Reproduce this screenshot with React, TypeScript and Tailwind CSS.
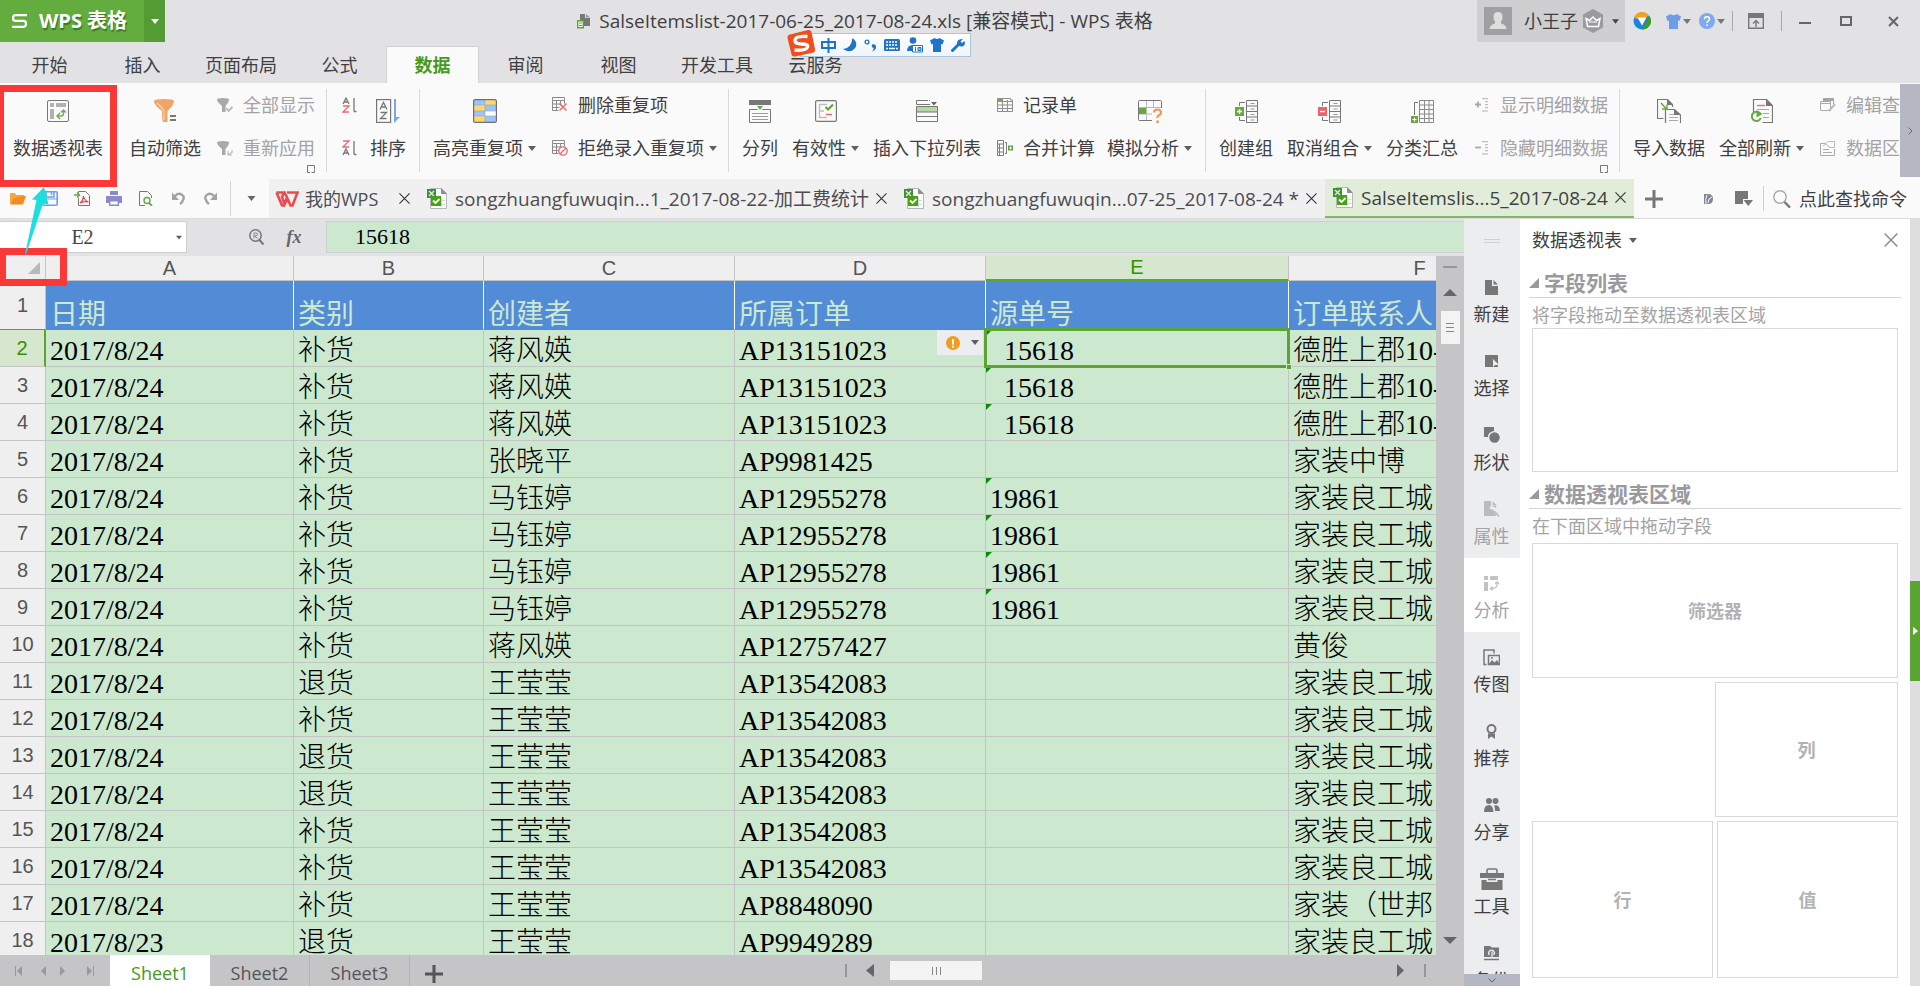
import type { ReactNode } from "react";

type Kids = { children: ReactNode };

function Svg({ w, h, children, cls = "" }: Kids & { w: number; h: number; cls?: string }) {
  return (
    <svg width={w} height={h} viewBox={`0 0 ${w} ${h}`} fill="none" className={`shrink-0 ${cls}`} aria-hidden="true">
      {children}
    </svg>
  );
}

function Caret({ color = "#5f5f5f", w = 8 }: { color?: string; w?: number }) {
  return (
    <svg width={w} height="5" viewBox="0 0 8 5" className="shrink-0" aria-hidden="true">
      <path d="M0 0h8L4 5z" fill={color} />
    </svg>
  );
}

function Cross({ size = 11, color = "#333" }: { size?: number; color?: string }) {
  return (
    <svg width={size} height={size} viewBox="0 0 12 12" className="shrink-0" aria-hidden="true">
      <path d="M.5 .5l11 11M11.5 .5l-11 11" stroke={color} strokeWidth="1.2" />
    </svg>
  );
}

/* ---------- ribbon ---------- */

function Big({ icon, label, drop }: { icon: ReactNode; label: string; drop?: boolean }) {
  return (
    <button className="flex shrink-0 flex-col items-center gap-3 pt-[15px]">
      <span className="flex h-[26px] items-center">{icon}</span>
      <span className="flex items-center gap-[5px] leading-6 whitespace-nowrap">
        {label}
        {drop && <Caret />}
      </span>
    </button>
  );
}

function Small({ icon, label, drop, off }: { icon: ReactNode; label: string; drop?: boolean; off?: boolean }) {
  return (
    <button className={`flex items-center gap-[10px] leading-6 whitespace-nowrap ${off ? "text-[#a3a3a6]" : ""}`}>
      <span className="flex w-4 justify-center">{icon}</span>
      <span className="flex items-center gap-[5px]">
        {label}
        {drop && <Caret />}
      </span>
    </button>
  );
}

function Stack({ children, more }: Kids & { more?: boolean }) {
  return (
    <div className="-mr-[2px] flex shrink-0 flex-col pt-[10px] pl-[2px]">
      <div className="flex flex-col items-start gap-[19px]">{children}</div>
      {more && (
        <button aria-label="更多选项" className="mt-[5px] self-end">
          <Svg w={8} h={8}>
            <path d="M3 7.500H.5V.5h7V4M4.500 7.500h3v-3" stroke="#777" />
          </Svg>
        </button>
      )}
    </div>
  );
}

function Group({ children, last }: Kids & { last?: boolean }) {
  return (
    <>
      <div className="flex shrink-0 items-start gap-[14px] px-[13px]">{children}</div>
      {!last && <div className="mt-[6px] h-[83px] w-px shrink-0 bg-[#dadadc]" />}
    </>
  );
}

const pivotIcon = (
  <Svg w={22} h={22}>
    <rect x=".5" y=".5" width="21" height="21" rx="1.500" stroke="#777" />
    <path d="M3 3h4v4H3zM9 3h10v4H9zM3 9h4v10H3z" fill="#b1b1b3" />
    <path d="M16.500 10.500v3q0 2.500-2.500 2.500h-3M14 12.500l2.500-2.500 2.500 2.500M13 13l-3 3 3 3" stroke="#74ad54" strokeWidth="1.500" />
  </Svg>
);
const filterIcon = (
  <Svg w={23} h={24}>
    <path d="M0 2Q0 0 10 0t10 2q0 4-6.500 10v11H9q-1-3-1-11Q0 6 0 2z" fill="#f2a368" />
    <path d="M3 4q5 4 7 8v9" stroke="#fbd5b8" strokeWidth="1.200" />
    <path d="M16 17h6M16 21h6" stroke="#777" strokeWidth="2" />
  </Svg>
);
const smallFilter = (kind: "check" | "again") => (
  <Svg w={16} h={15}>
    <path d="M0 1.500Q0 0 6 0t6 1.500Q12 4 8.500 8v6H5V8Q0 4 0 1.500z" fill="#a9a9ab" />
    {kind === "check" ? (
      <path d="M9 10l2.500 3L15.500 9" stroke="#b8b8ba" strokeWidth="1.800" />
    ) : (
      <path d="M15 9v2.500L11 14M11 10v4h4" stroke="#b8b8ba" strokeWidth="1.200" />
    )}
  </Svg>
);
const letterA = "M0 6L3 0l3 6M1.200 4h3.600";
const letterZ = "M0 0h6L0 6h6";
const sortSmall = (up: boolean) => (
  <Svg w={15} h={16}>
    <g transform="translate(1 1)">
      <path d={up ? letterA : letterZ} stroke={up ? "#777" : "#ea6b70"} strokeWidth="1.300" />
    </g>
    <g transform="translate(1 9)">
      <path d={up ? letterZ : letterA} stroke={up ? "#ea6b70" : "#777"} strokeWidth="1.300" />
    </g>
    <path d="M12 1v13.500M12 14.500h2.500" stroke="#777" strokeWidth="1.300" />
  </Svg>
);
const sortIcon = (
  <Svg w={24} h={24}>
    <rect x=".6" y=".6" width="14" height="22.800" stroke="#777" strokeWidth="1.200" />
    <path d="M4 10.500l3.500-7 3.500 7M5.300 8h4.400M4.500 13.500h6l-6 6h6" stroke="#777" strokeWidth="1.300" />
    <path d="M18 0h2v18h4l-6 6z" fill="#7ea6ec" />
  </Svg>
);
const highlightIcon = (
  <Svg w={24} h={24}>
    <path d="M1 1h11v5H1zM12 6h11v6H12zM1 12h11v5H1zM12 17h11v6H12z" fill="#9cc4fb" />
    <path d="M12 1h11v5H12zM1 6h11v6H1zM1 17h11v6H1z" fill="#ffd76a" />
    <path d="M12 12h11v5H12z" fill="#fff" />
    <path d="M12 1v22M1 6h22M1 12h22M1 17h22" stroke="#8aa4c8" strokeWidth=".6" />
    <rect x=".6" y=".6" width="22.800" height="22.800" rx="1.500" stroke="#6f6f78" strokeWidth="1.200" />
  </Svg>
);
const dupIcon = (ban: boolean) => (
  <Svg w={16} h={16}>
    <path d="M.5 .5h12v3H.5zM.5 3.500v10h6M4.500 3.500v10M8.500 3.500v5M.5 7h9M.5 10.500h7M12.500 3.500v3" stroke="#8a8a8c" />
    {ban ? (
      <>
        <circle cx="11" cy="11" r="4.200" stroke="#e86a6a" strokeWidth="1.300" fill="#fafafa" />
        <path d="M8 14l6-6" stroke="#e86a6a" strokeWidth="1.300" />
      </>
    ) : (
      <path d="M7.500 6.500l7 7M14.500 6.500l-7 7" stroke="#e86a6a" strokeWidth="1.500" />
    )}
  </Svg>
);
const splitIcon = (
  <Svg w={22} h={23}>
    <path d="M0 0h22v5H0z" fill="#777" />
    <path d="M8 6h6l-3 4z" fill="#67a845" />
    <path d="M8.500 9.500h-8v13h21v-13h-8" stroke="#777" />
    <path d="M3 13.500h16M3 16.500h16M3 19.500h16" stroke="#9a9a9c" />
  </Svg>
);
const validIcon = (
  <Svg w={22} h={22}>
    <rect x=".6" y=".6" width="20.800" height="20.800" rx="1.500" stroke="#777" strokeWidth="1.200" />
    <path d="M12 4.500H4.500v13H12M4.500 11H9" stroke="#bdbdbf" strokeWidth="1.300" />
    <path d="M10.500 7l2.500 2.500L18 4.500" stroke="#59a634" strokeWidth="2" />
    <path d="M11 14.500h6" stroke="#ea6b6b" strokeWidth="1.500" />
  </Svg>
);
const dropListIcon = (
  <Svg w={22} h={22}>
    <path d="M12 .5H.5v4H12M12 4.500h2M13 .5h1" stroke="#777" />
    <path d="M15 2h6l-3 3.500z" fill="#666" />
    <path d="M1 7h20v5H1z" fill="#b7d7a0" />
    <path d="M.5 6.500h21v15H.5zM.5 12h21M.5 16.500h21" stroke="#777" />
  </Svg>
);
const recordIcon = (
  <Svg w={16} h={14}>
    <path d="M1 1h5v2.500H1z" fill="#67b04b" />
    <path d="M.5 .5h13v1.500h2v11.500H.5zM.5 3.500h15M.5 7h15M.5 10.500h15M5.500 .5v13M10.500 2v12" stroke="#8f8f91" />
  </Svg>
);
const mergeIcon = (
  <Svg w={16} h={16}>
    <path d="M.5 .5h6v15h-6zM.5 4h6M.5 8h6M.5 12h6M2.500 4v12" stroke="#7f7f81" />
    <path d="M8 2.500h1.500v11H8" stroke="#7f7f81" />
    <path d="M11 5.500h5v5h-5z" fill="#5ba43a" />
    <path d="M12 8h3M13.500 6.500v3" stroke="#fff" />
  </Svg>
);
const whatIfIcon = (
  <Svg w={24} h={23}>
    <rect x=".5" y=".5" width="23" height="20" rx="1" stroke="#777" />
    <path d="M8.500 1v19M15.500 1v19M1 7.500h22M1 14h22" stroke="#b9b9bb" />
    <path d="M1 8h7v6H1z" fill="#67a845" />
    <path d="M14 8h10v15H14z" fill="#fafafa" />
    <path d="M16 12.500q0-3 3.500-3t3.500 3q0 1.700-2 2.700t-1.500 2.800" stroke="#ef9a55" strokeWidth="2.200" />
    <path d="M18.300 20.500h2.500V23h-2.500z" fill="#ef9a55" />
  </Svg>
);
const groupIcon = (color: string, minus: boolean) => (
  <Svg w={23} h={23}>
    <path d="M11.500 .5h11v22h-11zM11.500 6h11M11.500 11.500h11M11.500 17h11" stroke="#777" />
    <path d="M15.500 3.500h4M15.500 9h4M15.500 14.500h4M15.500 20h4" stroke="#999" />
    <path d="M10 2.500H4.500V6M4.500 17v3.500H10" stroke="#777" />
    <path d="M0 7h9v9H0z" fill={color} />
    <path d={minus ? "M2 11.500h5" : "M2 11.500h5M4.500 9v5"} stroke="#fff" strokeWidth="1.400" />
  </Svg>
);
const subtotalIcon = (
  <Svg w={23} h={23}>
    <path d="M8.500 .5h14v22h-14zM8.500 5h14M8.500 9.500h14M8.500 14h14M8.500 18.500h14M13.500 .5v22M18 .5v22" stroke="#8a8a8c" />
    <path d="M7 2.500H3.500V15" stroke="#777" />
    <path d="M0 16h7v7H0z" fill="#67a845" />
    <path d="M1.500 19.500h4M3.500 17.500v4" stroke="#fff" />
  </Svg>
);
const detailIcon = (minus: boolean) => (
  <Svg w={15} h={14}>
    <path d={minus ? "M0 6.500h6" : "M0 6.500h6M3 3.500v6"} stroke="#a9a9ab" strokeWidth="1.800" />
    <path d="M7 .7h6M10 3.700h3M10 6.700h3M10 9.700h3M7 13h6" stroke="#b0b0b2" />
  </Svg>
);
const importIcon = (
  <Svg w={24} h={24}>
    <path d="M6.500 19.500h-6V.5h10l5 5V8" stroke="#777" strokeWidth="1.200" />
    <path d="M10 0l6 6h-6zM17 10l7 6h-7z" fill="#777" />
    <path d="M8.500 24V10.500h9l6 5.500v8" stroke="#777" strokeWidth="1.200" />
    <path d="M12 15.500h5M12 18.500h9M12 21.500h9" stroke="#aaa" />
    <path d="M4 4l5.500 6M5 10h5V5.500" stroke="#67a845" strokeWidth="1.500" />
  </Svg>
);
const refreshIcon = (
  <Svg w={22} h={24}>
    <path d="M2.500 13V.5h13l6 6v17h-10" stroke="#777" strokeWidth="1.200" />
    <path d="M15 0l7 7h-7z" fill="#777" />
    <path d="M6 6.500h8" stroke="#ea6b6b" strokeWidth="1.400" />
    <path d="M6 10.500h12M12 14.500h6M12 18.500h6" stroke="#aaa" />
    <path d="M9 14.500a4.600 4.600 0 1 0 .8 4.500" stroke="#67a845" strokeWidth="2" />
    <path d="M5.500 11l6 4-6 3.500z" fill="#67a845" />
  </Svg>
);
const editIcon = (
  <Svg w={16} h={15}>
    <path d="M3 0h11v3H3z" fill="#a6a6a8" />
    <path d="M.5 5.500h10v7H.5zM.5 3.500h10v2H.5zM13.500 3v3" stroke="#ababad" />
    <path d="M9 13l6-7" stroke="#bcbcbe" strokeWidth="2" />
  </Svg>
);
const areaIcon = (
  <Svg w={16} h={15}>
    <path d="M.5 2.500h5M14.500 8v6.500H.5v-12M3 8.500h6M3 11.500h9" stroke="#ababad" />
    <path d="M8 .5h6.500v6H10L5.500 3z" stroke="#bcbcbe" />
    <path d="M3 5l3-2 4 4" stroke="#bcbcbe" />
  </Svg>
);

function Ribbon() {
  return (
    <div className="flex h-24 shrink-0 bg-[#fafafa]">
      <div className="flex min-w-0 flex-1 overflow-hidden">
        <div className="flex shrink-0 px-[13px]">
          <Big icon={pivotIcon} label="数据透视表" />
        </div>
        <Group>
          <Big icon={filterIcon} label="自动筛选" />
          <Stack more>
            <Small off icon={smallFilter("check")} label="全部显示" />
            <Small off icon={smallFilter("again")} label="重新应用" />
          </Stack>
        </Group>
        <Group>
          <Stack>
            <button aria-label="升序" className="flex h-6 w-4 items-center">{sortSmall(true)}</button>
            <button aria-label="降序" className="flex h-6 w-4 items-center">{sortSmall(false)}</button>
          </Stack>
          <Big icon={sortIcon} label="排序" />
        </Group>
        <Group>
          <Big icon={highlightIcon} label="高亮重复项" drop />
          <Stack>
            <Small icon={dupIcon(false)} label="删除重复项" />
            <Small icon={dupIcon(true)} label="拒绝录入重复项" drop />
          </Stack>
        </Group>
        <Group>
          <Big icon={splitIcon} label="分列" />
          <Big icon={validIcon} label="有效性" drop />
          <Big icon={dropListIcon} label="插入下拉列表" />
          <Stack>
            <Small icon={recordIcon} label="记录单" />
            <Small icon={mergeIcon} label="合并计算" />
          </Stack>
          <Big icon={whatIfIcon} label="模拟分析" drop />
        </Group>
        <Group>
          <Big icon={groupIcon("#67a845", false)} label="创建组" />
          <Big icon={groupIcon("#ea6468", true)} label="取消组合" drop />
          <Big icon={subtotalIcon} label="分类汇总" />
          <Stack more>
            <Small off icon={detailIcon(false)} label="显示明细数据" />
            <Small off icon={detailIcon(true)} label="隐藏明细数据" />
          </Stack>
        </Group>
        <Group last>
          <Big icon={importIcon} label="导入数据" />
          <Big icon={refreshIcon} label="全部刷新" drop />
          <Stack>
            <Small off icon={editIcon} label="编辑查" />
            <Small off icon={areaIcon} label="数据区" />
          </Stack>
        </Group>
      </div>
      <button aria-label="展开功能区" className="mt-px mb-[2px] flex w-5 shrink-0 items-center justify-center bg-[#b5b8c2]">
        <Svg w={5} h={8}>
          <path d="M.5 .5L4 4 .5 7.500" stroke="#666" />
        </Svg>
      </button>
    </div>
  );
}

/* ---------- title bar ---------- */

function TitleBar() {
  return (
    <header className="flex h-[42px] shrink-0 items-stretch">
      <button className="flex w-[144px] shrink-0 items-center gap-3 bg-[#63ac3e] pl-3 text-xl font-bold text-white">
        <Svg w={15} h={14}>
          <path d="M15 1.200H3.500Q1 1.200 1 4t2.500 2.800h8Q14 6.800 14 9.800t-2.500 3H0" stroke="#fff" strokeWidth="2.200" />
        </Svg>
        <span className="whitespace-nowrap [text-shadow:1px_2px_1px_#3c7a1e]">WPS 表格</span>
      </button>
      <button aria-label="应用菜单" className="flex w-[21px] shrink-0 items-center justify-center bg-[#559b33]">
        <Caret color="#fff" w={8} />
      </button>
      <div className="flex min-w-0 flex-1 items-center justify-center gap-2 pl-[88px]">
        <Svg w={14} h={15}>
          <path d="M3 0h5v4h5v8H7V6H3z" fill="#777" />
          <path d="M9 0l4 3.500H9z" fill="#999" />
          <path d="M.7 6.700h5.600v7H.7z" fill="#fff" stroke="#59a634" strokeWidth="1.400" />
          <path d="M2 9h3M2 11.500h3" stroke="#59a634" />
        </Svg>
        <h1 className="truncate text-[19px]">SalseItemslist-2017-06-25_2017-08-24.xls [兼容模式] - WPS 表格</h1>
      </div>
      <div className="flex shrink-0 items-center pr-[21px]">
        <button className="mr-2 flex h-full w-[148px] items-center bg-[#cfcfd1] pl-[7px]">
          <Svg w={28} h={28} cls="mr-3">
            <path d="M0 0h28v28H0z" fill="#a0a0a3" />
            <path d="M14 5q4.500 0 4.500 5 0 3-1.500 4.500v2q5 1 5.500 5.500h-17q.5-4.500 5.500-5.500v-2Q9.500 13 9.500 10 9.500 5 14 5z" fill="#dededf" />
          </Svg>
          小王子
          <Svg w={22} h={24} cls="mx-1">
            <path d="M11 0l10 5.500v13L11 24 1 18.500v-13z" fill="#9b9b9e" />
            <path d="M4 9.500l3.500 2L11 8l3.500 3.500 3.500-2-1.500 8h-11z" stroke="#fff" strokeWidth="1.500" />
            <path d="M7 13h8" stroke="#fff" />
          </Svg>
          <span className="ml-1"><Caret color="#444" w={7} /></span>
        </button>
        <button aria-label="在线服务">
          <Svg w={18} h={18}>
            <circle cx="9" cy="9" r="8.500" fill="#1c83e0" />
            <path d="M1 6a8.500 8.500 0 0 1 15-2.500L9 8z" fill="#f5a01e" />
            <path d="M16 3.500A8.500 8.500 0 0 1 9 17.500z" fill="#3a9a2b" />
            <path d="M4.500 5.500h9L9 13.500z" fill="#fff" />
          </Svg>
        </button>
        <button aria-label="皮肤" className="ml-[15px] flex items-center gap-[2px]">
          <Svg w={15} h={15}>
            <path d="M4.500 0q3 2.500 6 0L15 2.500 13.500 7 12 6.500V15H3V6.500L1.500 7 0 2.500z" fill="#6d9ce8" />
          </Svg>
          <Caret color="#777" />
        </button>
        <button aria-label="帮助" className="ml-2 flex items-center gap-[2px]">
          <Svg w={16} h={16}>
            <circle cx="8" cy="8" r="8" fill="#82a8f0" />
            <path d="M5.500 6.200q0-2.500 2.500-2.500t2.500 2.300q0 1.200-1.300 1.900T8 10" stroke="#fff" strokeWidth="1.500" />
            <path d="M7.200 11.500h1.600V13H7.200z" fill="#fff" />
          </Svg>
          <Caret color="#777" />
        </button>
        <span className="ml-[7px] h-5 w-px bg-[#a8a8ab]" />
        <button aria-label="隐藏功能区" className="mr-[17px] ml-[15px]">
          <Svg w={16} h={16}>
            <path d="M.7 .7h14.600v14.600H.7z" stroke="#777" strokeWidth="1.400" />
            <path d="M1 1h14v4H1z" fill="#777" />
            <path d="M8 14V8M5 10.500l3-3 3 3" stroke="#777" strokeWidth="1.400" />
          </Svg>
        </button>
        <span className="h-5 w-px bg-[#a8a8ab]" />
        <button aria-label="最小化" className="ml-[17px] flex h-4 w-3 items-center pt-[3px]"><span className="h-[2px] w-full bg-[#666]" /></button>
        <button aria-label="最大化" className="ml-[29px] h-[10px] w-3 border-2 border-[#666]" />
        <button aria-label="关闭" className="ml-9">
          <Svg w={11} h={11}>
            <path d="M1 1l9 9M10 1l-9 9" stroke="#666" strokeWidth="2" />
          </Svg>
        </button>
      </div>
    </header>
  );
}

const menus = ["开始", "插入", "页面布局", "公式", "数据", "审阅", "视图", "开发工具", "云服务"];

function Menus() {
  return (
    <nav className="flex h-[41px] shrink-0 items-end pl-[3px]">
      {menus.map((m) => (
        <button
          key={m}
          className={
            m === "数据"
              ? "h-[37px] min-w-[93px] border border-b-0 border-[#d2d2d5] bg-[#fafafa] px-4 font-bold text-[#459a1c]"
              : "h-[37px] min-w-[93px] px-4"
          }
        >
          {m}
        </button>
      ))}
    </nav>
  );
}

/* ---------- input method bar ---------- */

function ImeBar() {
  return (
    <div className="absolute top-[33px] left-[800px] flex h-6 items-center gap-[7px] border border-[#a9c4dc] bg-gradient-to-b from-white to-[#eef5fb] pr-[5px] pl-5">
      <div className="absolute -top-[5px] -left-[14px]">
        <Svg w={29} h={29}>
          <path d="M1 6L21 1q3-.5 3.500 2L28 20q.5 3-2.500 3.700L8 27.500q-3 .5-3.500-2L.5 9Q0 6.500 2 6z" fill="#ee4f1c" />
          <path d="M20.500 7.500Q8 6.500 8 11.500q0 3.500 7 3.500 6.500 0 5.500 3-1.500 4-13 3" stroke="#fff" strokeWidth="3.400" />
        </Svg>
      </div>
      <Svg w={15} h={15}>
        <path d="M1 4h13v6H1zM7.500 0v15" stroke="#1f73c9" strokeWidth="2" />
      </Svg>
      <Svg w={14} h={14}>
        <path d="M9.500 0Q15 4 12.500 9.500 8 16 0 11q8 0 9.500-11z" fill="#1f73c9" />
      </Svg>
      <Svg w={13} h={13}>
        <circle cx="3" cy="3" r="1.900" stroke="#1f73c9" strokeWidth="1.300" />
        <path d="M8 5.500q4-1 4 2.500 0 3-4 4.500 2-2 1.500-3.500Q7 8 8 5.500z" fill="#1f73c9" />
      </Svg>
      <Svg w={16} h={12}>
        <rect width="16" height="12" rx="1.500" fill="#1f73c9" />
        <path d="M2 3h12M2 6h12" stroke="#fff" strokeWidth="1.600" strokeDasharray="2 1" />
        <path d="M2 9.500h2M5 9.500h6M12 9.500h2" stroke="#fff" strokeWidth="1.600" />
      </Svg>
      <Svg w={16} h={16}>
        <circle cx="6" cy="3.500" r="3.300" fill="#1f73c9" />
        <path d="M0 14q0-6 6-6 3 0 4.500 2v4z" fill="#1f73c9" />
        <path d="M5.500 8.500h10v6.500h-10z" fill="#fff" stroke="#1f73c9" />
        <path d="M8.500 10v4M11 10.500h3v3h-3zM11 12h3" stroke="#1f73c9" />
      </Svg>
      <Svg w={14} h={14}>
        <path d="M4.500 0q2.500 2 5 0L14 2.500 12.500 6.500 11 6v8H3V6l-1.500.5L0 2.500z" fill="#1f73c9" />
      </Svg>
      <Svg w={14} h={14}>
        <path d="M1.500 12.500L8 6" stroke="#1f73c9" strokeWidth="3" strokeLinecap="round" />
        <path d="M12 1L9.500 3.500 11 5l2.500-2q1.500 4-2 5.500-4 .5-5.500-2.500Q5.500 1 12 1z" fill="#1f73c9" />
      </Svg>
    </div>
  );
}

/* ---------- quick access and document tabs ---------- */

const xlsIcon = (
  <Svg w={21} h={23}>
    <path d="M3.500 1.500h11l5 5v15h-16z" fill="#fff" stroke="#b5b5ba" />
    <path d="M14 1v6h6z" fill="#8f8f9a" />
    <path d="M11 13.500h7M11 17.500h7M6 17.500h3M14.500 11v9" stroke="#d5d5d8" />
    <path d="M0 2h9v9H0z" fill="#3f8f3a" />
    <path d="M2 4l5 5M7 4L2 9" stroke="#d9f0d2" strokeWidth="1.400" />
    <path d="M4 9h10v10H4z" fill="#43a312" />
    <path d="M6 13.500l2.500 2.500 4-4" stroke="#fff" strokeWidth="1.800" />
  </Svg>
);

const docTabs = [
  { name: "songzhuangfuwuqin...1_2017-08-22-加工费统计", w: "w-[477px]" },
  { name: "songzhuangfuwuqin...07-25_2017-08-24 *", w: "w-[430px]" },
];

function DocBar() {
  return (
    <div className="flex h-[39px] shrink-0 items-stretch bg-[#fafafa]">
      <div className="flex w-[269px] shrink-0 items-center gap-4 pl-[10px]">
        <button aria-label="打开">
          <Svg w={16} h={13}>
            <path d="M0 12V1h5l1 2h8v2H4z" fill="#f7a53e" />
            <path d="M3.500 5.500L16 4l-3 8.500H0z" fill="#f58a1f" />
          </Svg>
        </button>
        <button aria-label="保存">
          <Svg w={16} h={15}>
            <rect x=".8" y=".8" width="14.400" height="13.400" rx="1" stroke="#6f9fe6" strokeWidth="1.600" />
            <path d="M4 1v5h8V1M9.500 1v3" stroke="#6f9fe6" strokeWidth="1.500" />
            <path d="M1 8h14" stroke="#6f9fe6" />
          </Svg>
        </button>
        <button aria-label="输出为PDF">
          <Svg w={16} h={15}>
            <path d="M4.500 2V.5h7l4 4v10h-11V7" stroke="#777" />
            <path d="M0 4h5M3 1.500L5.500 4 3 6.500" stroke="#67a845" strokeWidth="1.500" />
            <path d="M6 12q3-2 3.500-7 1 5 5 6-4-1-8.500 1z" stroke="#dd4343" strokeWidth="1.200" />
          </Svg>
        </button>
        <button aria-label="打印">
          <Svg w={16} h={15}>
            <path d="M4 0h8v4H4zM0 5h16v7H0z" fill="#8d8ac6" />
            <path d="M3.700 9.700h8.600v4.600H3.700z" fill="#fff" stroke="#8d8ac6" strokeWidth="1.400" />
          </Svg>
        </button>
        <button aria-label="打印预览">
          <Svg w={16} h={15}>
            <path d="M7 14.500H1.500V.5h8l4 4V7" stroke="#777" />
            <circle cx="9" cy="9.500" r="3" stroke="#67a845" strokeWidth="1.400" />
            <path d="M11 12l3 3" stroke="#67a845" strokeWidth="1.800" />
          </Svg>
        </button>
        <button aria-label="撤销" className="flex w-4 justify-center">
          <Svg w={13} h={13}>
            <path d="M2.500 4.500Q6 .5 9.500 2.500T11 8q-.5 2.500-3 4" stroke="#a3a3a6" strokeWidth="2.400" />
            <path d="M0 .5v7.500h7z" fill="#a3a3a6" />
          </Svg>
        </button>
        <button aria-label="重做" className="flex w-4 justify-center">
          <Svg w={13} h={13}>
            <path d="M10.500 4.500Q7 .5 3.500 2.500T2 8q.5 2.500 3 4" stroke="#a3a3a6" strokeWidth="2.400" />
            <path d="M13 .5v7.500H6z" fill="#a3a3a6" />
          </Svg>
        </button>
        <span className="-ml-1 h-full py-[2px]"><span className="block h-full w-px bg-[#d5d5d8]" /></span>
        <button aria-label="自定义"><Caret color="#666" w={9} /></button>
      </div>
      <div className="flex w-[149px] shrink-0 items-center bg-[#f0f0f1] pr-2 pl-[6px] text-[#4d4d50]">
        <Svg w={24} h={16} cls="mr-[6px]">
          <path d="M1.500 1.500H9L7 6l2.500 7L12 6.500 9.500 1.500M1.500 1.500l5.500 13h2l3.500-7 3 7h2l5-13H12" stroke="#f0494d" strokeWidth="2.600" />
        </Svg>
        <a href="#wps" className="flex-1 whitespace-nowrap">我的WPS</a>
        <button aria-label="关闭标签"><Cross /></button>
      </div>
      {docTabs.map((t) => (
        <div key={t.name} className={`flex shrink-0 items-center gap-[7px] bg-[#f0f0f1] pr-2 pl-[9px] text-[19px] text-[#4d4d50] ${t.w}`}>
          {xlsIcon}
          <a href="#doc" className="min-w-0 flex-1 whitespace-nowrap">{t.name}</a>
          <button aria-label="关闭标签"><Cross /></button>
        </div>
      ))}
      <div className="flex w-[309px] shrink-0 items-center gap-[7px] border-b-2 border-[#83b965] bg-[#e1edd9] pr-2 pl-2 text-[19px]">
        {xlsIcon}
        <a href="#doc" className="min-w-0 flex-1 whitespace-nowrap">SalseItemslis...5_2017-08-24</a>
        <button aria-label="关闭标签"><Cross /></button>
      </div>
      <div className="flex min-w-0 flex-1 items-center justify-between pr-[13px] pl-[11px]">
        <button aria-label="新建标签">
          <Svg w={18} h={18}>
            <path d="M9 0v18M0 9h18" stroke="#777" strokeWidth="3" />
          </Svg>
        </button>
        <div className="flex items-center">
          <button aria-label="文档管理">
            <Svg w={9} h={10}>
              <path d="M0 0h4q5 0 5 5t-5 5H0z" fill="#7f8798" />
              <path d="M2 10Q1 5 3 1M4 9q0-5 4-6" stroke="#fafafa" />
            </Svg>
          </button>
          <button aria-label="窗口列表" className="ml-[22px]">
            <Svg w={18} h={15}>
              <path d="M0 0h13v8H8v5H0z" fill="#777" />
              <path d="M8.500 9H18l-4.750 6z" fill="#777" />
            </Svg>
          </button>
          <span className="mr-[9px] ml-[10px] h-[25px] w-px bg-[#d0d0d3]" />
          <Svg w={18} h={18} cls="mr-2">
            <circle cx="7" cy="7" r="6.200" stroke="#a8a8ab" strokeWidth="1.400" />
            <path d="M11.500 12l5.500 5.500" stroke="#777" strokeWidth="2.400" />
          </Svg>
          <button className="whitespace-nowrap">点此查找命令</button>
        </div>
      </div>
    </div>
  );
}

/* ---------- formula bar ---------- */

function FormulaBar() {
  return (
    <div className="flex h-[37px] shrink-0 items-center bg-[#e2e2e5] pb-px">
      <div className="flex h-8 w-[187px] shrink-0 items-center border border-l-0 border-[#cfcfd3] bg-white pr-1">
        <input
          aria-label="名称框"
          defaultValue="E2"
          className="w-[165px] bg-transparent text-center font-['Liberation_Serif','Noto_Sans_CJK_SC',serif] text-xl text-[#444] outline-none"
        />
        <button aria-label="名称列表" className="ml-auto"><Caret w={6} /></button>
      </div>
      <button aria-label="浏览公式结果" className="ml-[62px]">
        <Svg w={15} h={16}>
          <circle cx="6.500" cy="6.500" r="5.700" stroke="#777" strokeWidth="1.500" />
          <path d="M5 9.500V4h2q1.500 0 1.500 1.300T7 6.800H5.500L8.500 9.500" stroke="#888" />
          <path d="M10.500 11l4 4.500" stroke="#777" strokeWidth="2.200" />
        </Svg>
      </button>
      <button aria-label="插入函数" className="ml-[22px] w-4 font-['Liberation_Serif',serif] text-lg leading-6 font-bold text-[#666] italic">
        fx
      </button>
      <input
        aria-label="编辑栏"
        defaultValue="15618"
        className="ml-6 h-8 min-w-0 flex-1 border border-r-0 border-[#cfcfd3] bg-[#cce8cf] pl-7 font-['Liberation_Serif','Noto_Sans_CJK_SC',serif] text-[22px] text-black outline-none"
      />
    </div>
  );
}

/* ---------- sheet ---------- */

type Row = [string, string, string, string, string, string];
const D = "2017/8/24";
const rows: Row[] = [
  [D, "补货", "蒋风媖", "AP13151023", " 15618", "德胜上郡10-"],
  [D, "补货", "蒋风媖", "AP13151023", " 15618", "德胜上郡10-"],
  [D, "补货", "蒋风媖", "AP13151023", " 15618", "德胜上郡10-"],
  [D, "补货", "张晓平", "AP9981425", "", "家装中博"],
  [D, "补货", "马钰婷", "AP12955278", "19861", "家装良工城"],
  [D, "补货", "马钰婷", "AP12955278", "19861", "家装良工城"],
  [D, "补货", "马钰婷", "AP12955278", "19861", "家装良工城"],
  [D, "补货", "马钰婷", "AP12955278", "19861", "家装良工城"],
  [D, "补货", "蒋风媖", "AP12757427", "", "黄俊"],
  [D, "退货", "王莹莹", "AP13542083", "", "家装良工城"],
  [D, "补货", "王莹莹", "AP13542083", "", "家装良工城"],
  [D, "退货", "王莹莹", "AP13542083", "", "家装良工城"],
  [D, "退货", "王莹莹", "AP13542083", "", "家装良工城"],
  [D, "补货", "王莹莹", "AP13542083", "", "家装良工城"],
  [D, "补货", "王莹莹", "AP13542083", "", "家装良工城"],
  [D, "补货", "王莹莹", "AP8848090", "", "家装（世邦"],
  ["2017/8/23", "退货", "王莹莹", "AP9949289", "", "家装良工城"],
];
const heads = ["日期", "类别", "创建者", "所属订单", "源单号", "订单联系人"];

function Sheet() {
  return (
    <div className="min-w-0 flex-1 overflow-hidden">
      <table className="w-[1551px] table-fixed border-separate border-spacing-0">
        <colgroup>
          <col className="w-[46px]" />
          <col className="w-[248px]" />
          <col className="w-[190px]" />
          <col className="w-[251px]" />
          <col className="w-[251px]" />
          <col className="w-[303px]" />
          <col className="w-[262px]" />
        </colgroup>
        <thead>
          <tr className="text-xl leading-6 text-[#555] [&>th]:font-['Liberation_Sans',sans-serif] [&>th]:font-normal">
            <th className="h-[25px] border-r border-b border-[#c4c4c7] bg-[#efefef] p-0 pr-[5px]">
              <span className="flex justify-end">
                <Svg w={12} h={12}>
                  <path d="M12 0v12H0z" fill="#b9b9bb" />
                </Svg>
              </span>
            </th>
            {["A", "B", "C", "D", "E", "F"].map((c) => (
              <th
                key={c}
                className={
                  c === "E"
                    ? "h-[25px] border-r border-b-2 border-r-[#c4c4c7] border-b-[#5aa532] bg-[#d7e6cf] p-0 leading-[23px] text-[#2f9400]"
                    : "h-[25px] border-r border-b border-[#c4c4c7] bg-[#efefef] p-0"
                }
              >
                {c}
              </th>
            ))}
          </tr>
        </thead>
        <tbody className="font-['Liberation_Serif','Noto_Sans_CJK_SC',serif] text-[28px] leading-[30px] text-black">
          <tr className="h-[49px] text-[#cce8cf]">
            <th className="border-r border-b border-r-[#c4c4c7] border-b-[#5aa532] bg-[#efefef] p-0 font-['Liberation_Sans',sans-serif] text-xl leading-6 font-normal text-[#555]">
              1
            </th>
            {heads.map((h) => (
              <td key={h} className="h-[49px] border-r border-b border-r-white border-b-[#5aa532] bg-[#528cd6] p-0 pl-1 align-bottom leading-7 font-normal whitespace-nowrap">
                {h}
              </td>
            ))}
          </tr>
          {rows.map((r, i) => (
            <tr key={i} className="h-[37px]">
              <th
                className={
                  i === 0
                    ? "border-r-2 border-b border-r-[#5aa532] border-b-[#c4c4c7] bg-[#d7e6cf] p-0 font-['Liberation_Sans',sans-serif] text-xl leading-6 font-normal text-[#2f9400]"
                    : "border-r border-b border-[#c4c4c7] bg-[#efefef] p-0 font-['Liberation_Sans',sans-serif] text-xl leading-6 font-normal text-[#555]"
                }
              >
                {i + 2}
              </th>
              {r.map((v, j) => (
                <td key={j} className="relative h-[37px] border-r border-b border-[#c4c4c7] bg-[#cce8cf] p-0 pt-[6px] pl-1 font-light whitespace-pre">
                  {j === 4 && v !== "" && (
                    <svg width="6" height="6" className="absolute top-0 left-0" aria-hidden="true">
                      <path d="M0 0h6L0 6z" fill="#0a8a0a" />
                    </svg>
                  )}
                  {v.startsWith(" ") ? <span className="pl-[14px]">{v.trim()}</span> : v}
                  {i === 0 && j === 4 && (
                    <>
                      <span className="absolute -inset-[2px] z-10 border-[3px] border-[#5aa532]" />
                      <span className="absolute -right-[4px] -bottom-[4px] z-10 h-[6px] w-[6px] border border-[#cce8cf] bg-[#5aa532]" />
                    </>
                  )}
                  {i === 0 && j === 3 && (
                    <button aria-label="错误检查选项" className="absolute top-0 right-[2px] flex h-[25px] w-[46px] items-center justify-between bg-[#ecedef] pr-1 pl-[9px]">
                      <Svg w={14} h={14}>
                        <circle cx="7" cy="7" r="7" fill="#f09d22" />
                        <path d="M7 3v5.500M7 9.800v1.700" stroke="#fff" strokeWidth="2" />
                      </Svg>
                      <Caret />
                    </button>
                  )}
                </td>
              ))}
            </tr>
          ))}
        </tbody>
      </table>
    </div>
  );
}

function VScroll() {
  return (
    <div className="flex w-7 shrink-0 flex-col items-center bg-[#c5c5c8] pt-[10px] pb-[11px]">
      <span className="h-[2px] w-[14px] bg-[#969698]" />
      <button aria-label="向上滚动" className="mt-[21px]">
        <Svg w={14} h={7}><path d="M7 0l7 7H0z" fill="#666" /></Svg>
      </button>
      <span className="mt-[15px] flex h-[33px] w-[19px] flex-col items-center justify-center gap-[3px] bg-[#f3f3f3]">
        <span className="h-px w-2 bg-[#888]" />
        <span className="h-px w-2 bg-[#888]" />
        <span className="h-px w-2 bg-[#888]" />
      </span>
      <button aria-label="向下滚动" className="mt-auto">
        <Svg w={14} h={7}><path d="M7 7l7-7H0z" fill="#666" /></Svg>
      </button>
    </div>
  );
}

function SheetBar() {
  return (
    <div className="flex h-[31px] shrink-0 items-stretch bg-[#c5c5c8]">
      <div className="flex w-[110px] shrink-0 items-center pl-[15px]">
        <button aria-label="第一张" className="mr-[19px]"><Svg w={7} h={10}><path d="M.5 0v10" stroke="#999" /><path d="M7 0v10L2 5z" fill="#999" /></Svg></button>
        <button aria-label="上一张" className="mr-[14px]"><Svg w={5} h={10}><path d="M5 0v10L0 5z" fill="#999" /></Svg></button>
        <button aria-label="下一张" className="mr-[22px]"><Svg w={5} h={10}><path d="M0 0v10l5-5z" fill="#999" /></Svg></button>
        <button aria-label="最后一张"><Svg w={7} h={10}><path d="M6.500 0v10" stroke="#999" /><path d="M0 0v10l5-5z" fill="#999" /></Svg></button>
      </div>
      <button className="w-[100px] bg-white pt-1 text-[#459a1c]">Sheet1</button>
      <button className="w-[100px] border-r border-[#b4b4b7] pt-1 text-[#555]">Sheet2</button>
      <button className="w-[100px] border-r border-[#b4b4b7] pt-1 text-[#555]">Sheet3</button>
      <button aria-label="新建工作表" className="ml-[15px] pt-[6px]">
        <Svg w={18} h={18}><path d="M9 0v18M0 9h18" stroke="#555" strokeWidth="3" /></Svg>
      </button>
      <div className="ml-auto flex w-[619px] items-center">
        <span className="h-[13px] w-[2px] bg-[#969698]" />
        <button aria-label="向左滚动" className="ml-[19px]"><Svg w={8} h={13}><path d="M8 0v13L0 6.500z" fill="#666" /></Svg></button>
        <span className="ml-4 flex h-[19px] w-[92px] items-center justify-center gap-[3px] bg-[#f3f3f3]">
          <span className="h-2 w-px bg-[#888]" />
          <span className="h-2 w-px bg-[#888]" />
          <span className="h-2 w-px bg-[#888]" />
        </span>
        <button aria-label="向右滚动" className="mr-5 ml-auto"><Svg w={7} h={13}><path d="M0 0v13l7-6.500z" fill="#666" /></Svg></button>
        <span className="mr-[38px] h-[13px] w-[2px] bg-[#969698]" />
      </div>
    </div>
  );
}

/* ---------- side bar ---------- */

const sideItems: { label: string; icon: ReactNode; look: "on" | "off" | "active" }[] = [
  { label: "新建", look: "on", icon: <Svg w={13} h={15}><path d="M0 0h7v6h6v9H0z" fill="#777" /><path d="M8.500 0L13 4.500H8.500z" fill="#777" /></Svg> },
  { label: "选择", look: "on", icon: <Svg w={13} h={12}><path d="M0 0h13v12H0z" fill="#777" /><path d="M8 4v8l2-2h4z" fill="#ecedef" /></Svg> },
  { label: "形状", look: "on", icon: <Svg w={16} h={16}><path d="M0 0h10v4q-6 1-6 6H0z" fill="#777" /><circle cx="10.500" cy="10.500" r="5.200" fill="#777" /></Svg> },
  { label: "属性", look: "off", icon: <Svg w={16} h={16}><path d="M0 0h7v5h5v10H0z" fill="#bbb" /><path d="M8.500 0L13 4.500H8.500z" fill="#bbb" /><path d="M6 7q5-1 5 3l4 5" stroke="#ecedef" strokeWidth="3" /><path d="M6 9q3 1 5 2l4 4.500" stroke="#bbb" strokeWidth="1.600" /></Svg> },
  { label: "分析", look: "active", icon: <Svg w={16} h={15}><path d="M0 0h4v4H0zM6 0h8v4H6zM0 6h4v9H0z" fill="#c2c2c2" /><path d="M13 6.500V9q0 3.500-6 3.500M11 8l2-2 2 2M8.500 10.500l-2 2 2 2" stroke="#c2c2c2" strokeWidth="1.300" /></Svg> },
  { label: "传图", look: "on", icon: <Svg w={17} h={17}><path d="M3.500 15.500H1V1h10v3.500M5.500 6.500h11v9h-11z" stroke="#777" strokeWidth="1.500" /><path d="M6 15l3-4 2.500 2.500L14 11l2.500 4z" fill="#777" /><circle cx="9" cy="9" r="1" fill="#777" /></Svg> },
  { label: "推荐", look: "on", icon: <Svg w={11} h={15}><circle cx="5.500" cy="5" r="4" stroke="#777" strokeWidth="2" /><path d="M2 9l1 .5h5L9 9v6l-3.500-2.500L2 15z" fill="#777" /></Svg> },
  { label: "分享", look: "on", icon: <Svg w={16} h={14}><circle cx="5" cy="3" r="3" fill="#777" /><circle cx="11.500" cy="3" r="3" fill="#777" /><path d="M0 14q0-7 5-7 4 0 4.500 7zM10 7.500q5.500-1.500 6 5.500h-5q0-4-1-5.500z" fill="#777" /></Svg> },
  { label: "工具", look: "on", icon: <Svg w={24} h={22}><path d="M7 6V2.500Q7 1 8.500 1h7Q17 1 17 2.500V6" stroke="#777" strokeWidth="1.600" /><path d="M0 5h24v5H0zM1.500 12h5v2h11v-2h5v10h-21z" fill="#777" /><path d="M8 11.500h8" stroke="#777" strokeWidth="1.500" /></Svg> },
  { label: "备份", look: "on", icon: <Svg w={16} h={15}><path d="M0 0h6l2 1.500h7V11H0z" fill="#777" /><path d="M5.500 9a2.800 2.800 0 1 1 4 0M8 5.500V12" stroke="#ecedef" strokeWidth="1.300" /><path d="M0 13.500h15" stroke="#777" strokeWidth="1.500" /></Svg> },
];

function SideBar() {
  return (
    <aside className="flex w-14 shrink-0 flex-col bg-[#ecedef]">
      <div className="flex h-[43px] shrink-0 flex-col items-center justify-center gap-[2px]">
        <span className="h-px w-4 bg-[#cfcfd2]" />
        <span className="h-px w-4 bg-[#cfcfd2]" />
      </div>
      <div className="min-h-0 flex-1 overflow-hidden">
        {sideItems.map((s) => (
          <button
            key={s.label}
            className={`flex h-[74px] w-full flex-col items-center pt-[13px] pr-px ${
              s.look === "active" ? "bg-white text-[#a3a3a6]" : s.look === "off" ? "text-[#a3a3a6]" : ""
            }`}
          >
            <span className="flex h-6 items-center">{s.icon}</span>
            <span className="mt-[3px] leading-6">{s.label}</span>
          </button>
        ))}
      </div>
      <button aria-label="更多工具" className="flex h-3 shrink-0 items-center justify-center bg-[#b5b8c2]">
        <Svg w={8} h={5}><path d="M.5 .5L4 4 7.500 .5" stroke="#666" /></Svg>
      </button>
    </aside>
  );
}

/* ---------- pivot panel ---------- */

function Heading({ children }: Kids) {
  return (
    <h2 className="-mx-[3px] flex h-[37px] shrink-0 items-end gap-[5px] border-b border-[#d5d5d7] text-[21px] leading-7 font-bold text-[#9a9a9d]">
      <Svg w={10} h={10} cls="mb-[9px]"><path d="M10 0v10H0z" fill="#9a9a9d" /></Svg>
      {children}
    </h2>
  );
}

function Zone({ children, cls }: Kids & { cls: string }) {
  return <div className={`flex items-center justify-center border border-[#d9d9db] bg-white font-bold text-[#b2b2b4] ${cls}`}>{children}</div>;
}

function PivotPanel() {
  return (
    <section className="flex w-[390px] shrink-0 flex-col bg-white px-3 pb-2">
      <div className="flex h-[42px] shrink-0 items-center justify-between">
        <button className="flex items-center gap-[7px]">
          数据透视表 <Caret />
        </button>
        <button aria-label="关闭面板"><Cross size={14} color="#888" /></button>
      </div>
      <Heading>字段列表</Heading>
      <p className="shrink-0 pt-1 leading-[26px] text-[#a3a3a6]">将字段拖动至数据透视表区域</p>
      <div className="h-36 shrink-0 border border-[#d9d9db]" />
      <Heading>数据透视表区域</Heading>
      <p className="shrink-0 pt-1 pb-1 leading-[26px] text-[#a3a3a6]">在下面区域中拖动字段</p>
      <Zone cls="h-[135px] shrink-0">筛选器</Zone>
      <Zone cls="mt-1 h-[135px] w-1/2 shrink-0 self-end">列</Zone>
      <div className="mt-1 flex min-h-0 flex-1 gap-1">
        <Zone cls="flex-1">行</Zone>
        <Zone cls="flex-1">值</Zone>
      </div>
    </section>
  );
}

/* ---------- hand-drawn marks ---------- */

function Marks() {
  return (
    <svg width="130" height="220" viewBox="0 80 130 220" className="pointer-events-none absolute top-20 left-0" fill="none" aria-hidden="true">
      <path d="M0.500 88.500h113v95H.5z" stroke="#fb3838" strokeWidth="7" />
      <path d="M2.500 251.500h61v31h-61z" stroke="#fb3838" strokeWidth="7" />
      <path d="M44 187l4.500 17.500-5.500-1L26 254.500h-1L36.500 200l-4.500-.5z" fill="#19dfdf" />
    </svg>
  );
}

export default function App() {
  return (
    <div className="relative flex h-screen w-full flex-col overflow-hidden bg-[#e2e2e4] font-['Open_Sans','Noto_Sans_CJK_SC',sans-serif] text-lg leading-6 text-[#3f3f41]">
      <TitleBar />
      <Menus />
      <Ribbon />
      <DocBar />
      <main className="flex min-h-0 flex-1 border-t border-[#dcdcdf]">
        <div className="flex min-w-0 flex-1 flex-col">
          <FormulaBar />
          <div className="flex min-h-0 flex-1">
            <Sheet />
            <VScroll />
          </div>
          <SheetBar />
        </div>
        <SideBar />
        <PivotPanel />
        <div className="w-[10px] shrink-0 bg-[#dedee0] pt-[362px]">
          <button aria-label="折叠面板" className="flex h-[100px] w-full items-center justify-center bg-[#5aa532]">
            <Svg w={5} h={8}><path d="M0 0v8l5-4z" fill="#fff" /></Svg>
          </button>
        </div>
      </main>
      <ImeBar />
      <Marks />
    </div>
  );
}
